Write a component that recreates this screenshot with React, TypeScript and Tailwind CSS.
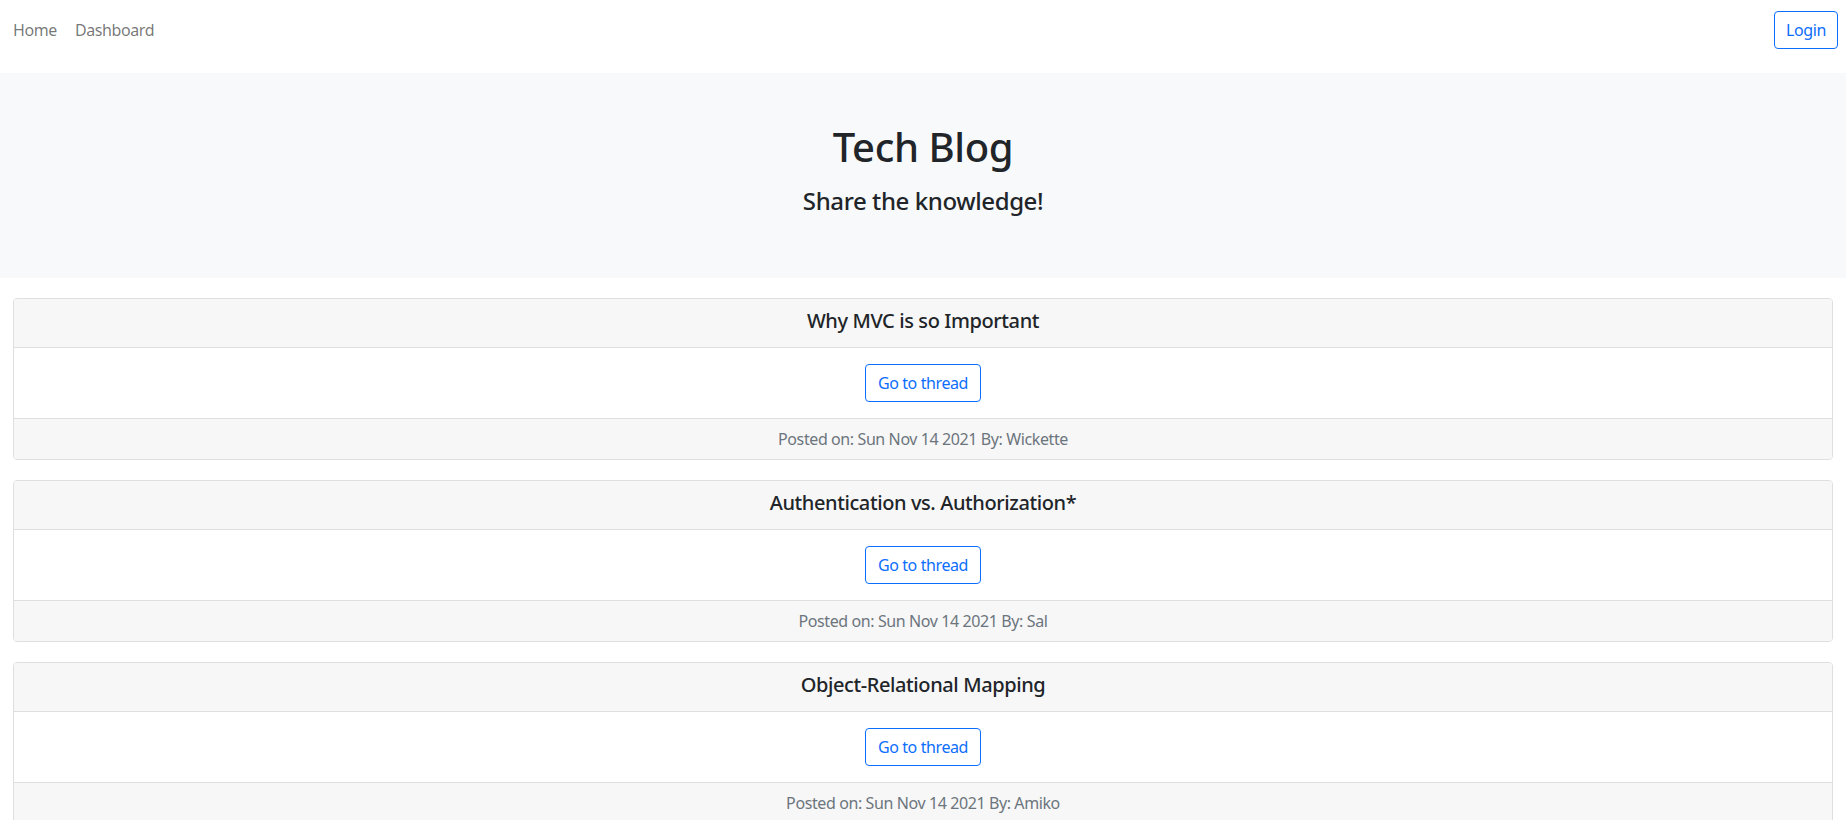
import React from "react";

const posts = [
  { title: "Why MVC is so Important", author: "Wickette" },
  { title: "Authentication vs. Authorization*", author: "Sal" },
  { title: "Object-Relational Mapping", author: "Amiko" },
];

export default function App() {
  return (
    <div className="min-h-screen bg-white font-['Noto_Sans','Open_Sans',sans-serif] tracking-[-0.025em] text-[#212529]">
      <nav className="flex h-[73px] items-start justify-between pl-[13px] pr-[8px] pt-[11px]">
        <div className="flex h-[38px] items-center gap-[18px] text-[16px] text-black/55">
          <a>Home</a>
          <a>Dashboard</a>
        </div>
        <button className="h-[38px] w-[64px] rounded-[4px] border border-[#0d6efd] text-[16px] text-[#0d6efd]">
          Login
        </button>
      </nav>
      <header className="h-[205px] bg-[#f8f9fa] pt-[50px] text-center">
        <h1 className="text-[40px] font-medium leading-[48px]">Tech Blog</h1>
        <h4 className="mt-[15px] text-[24px] font-medium leading-[29px]">Share the knowledge!</h4>
      </header>
      <main className="flex flex-col gap-[20px] px-[13px] pt-[20px]">
        {posts.map((p) => (
          <div key={p.title} className="overflow-hidden rounded-[4px] border border-[#dfdfdf]">
            <div className="flex h-[49px] items-center justify-center border-b border-[#dfdfdf] bg-[#f7f7f7] pb-[5px] text-[20px] font-medium">
              {p.title}
            </div>
            <div className="flex h-[70px] items-center justify-center bg-white">
              <button className="h-[38px] rounded-[4px] border border-[#0d6efd] px-[12px] text-[16px] text-[#0d6efd]">
                Go to thread
              </button>
            </div>
            <div className="flex h-[41px] items-center justify-center border-t border-[#dfdfdf] bg-[#f7f7f7] text-[16px] text-[#6c757d]">
              Posted on: Sun Nov 14 2021 By: {p.author}
            </div>
          </div>
        ))}
      </main>
    </div>
  );
}
